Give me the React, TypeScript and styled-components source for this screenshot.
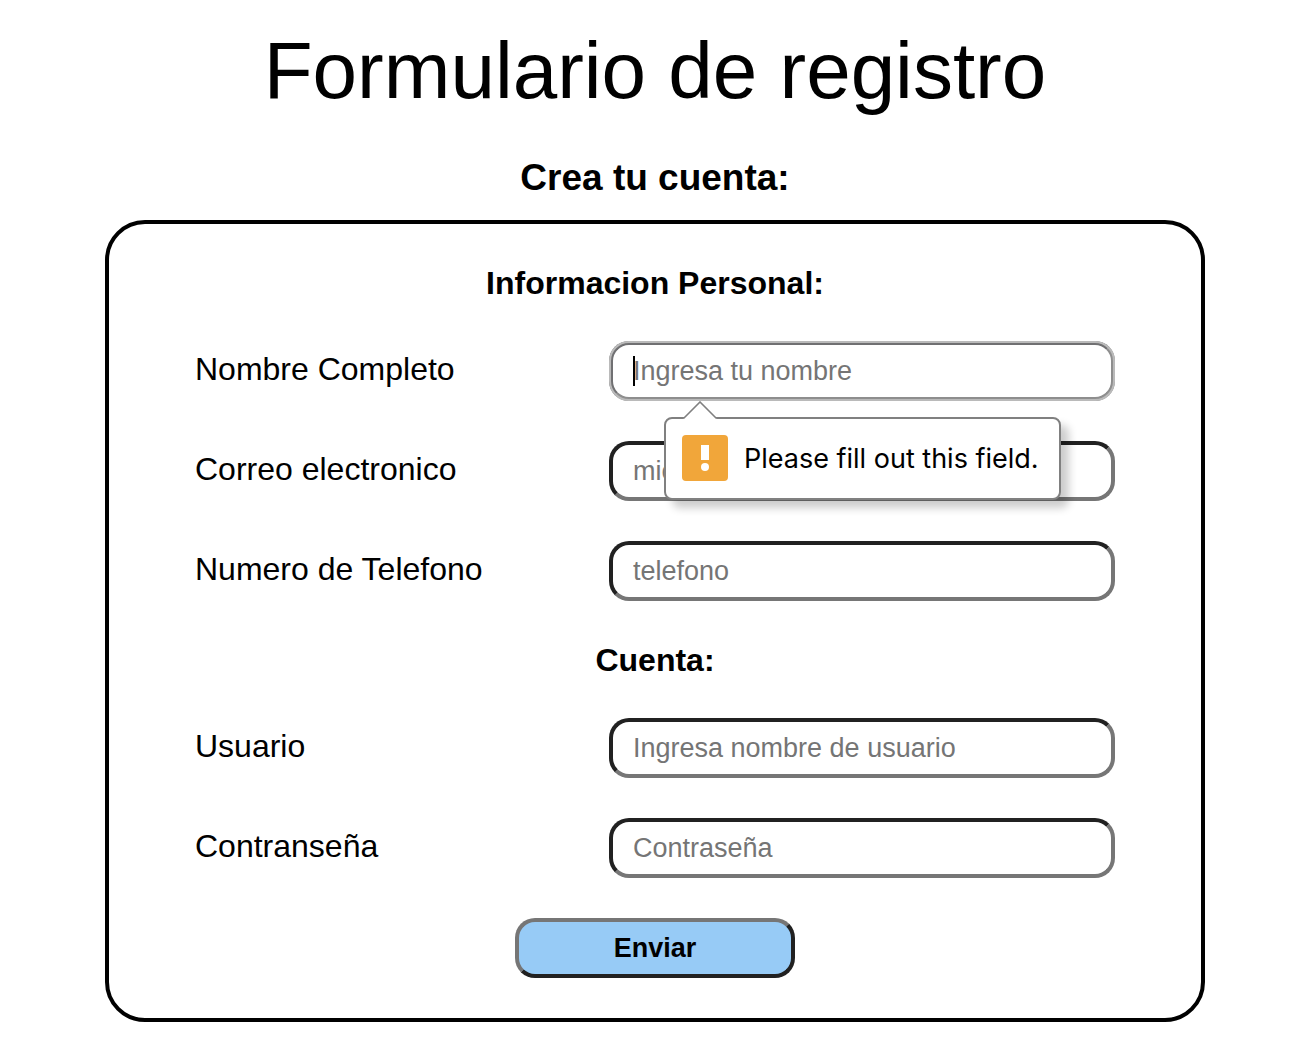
import React from "react";
import styled, { createGlobalStyle, css } from "styled-components";

const GlobalStyle = createGlobalStyle`
  *, *::before, *::after { box-sizing: border-box; }
  body {
    margin: 0;
    background: #fff;
    color: #000;
    font-family: Helvetica, "Liberation Sans", Arial, sans-serif;
    font-size: 32px;
  }
`;

const Page = styled.main`
  display: flex;
  flex-direction: column;
  align-items: center;
  padding: 26px 4px 24px 0;
`;

const Title = styled.h1`
  margin: 0 0 40px;
  font-size: 80px;
  line-height: 90px;
  font-weight: 400;
  text-align: center;
`;

const Subtitle = styled.h2`
  margin: 0 0 20px;
  font-size: 37px;
  line-height: 44px;
  font-weight: 700;
`;

const Form = styled.form`
  display: flex;
  flex-direction: column;
  gap: 40px;
  width: 84%;
  max-width: 1100px;
  padding: 40px 86px;
  border: 4px solid #000;
  border-radius: 40px;
`;

const Section = styled.section`
  display: flex;
  flex-direction: column;
  gap: 40px;
`;

const SectionTitle = styled.h3`
  margin: 0;
  padding-top: 2px;
  font-size: 32px;
  line-height: 35px;
  font-weight: 700;
  text-align: center;
`;

const Row = styled.div`
  display: grid;
  grid-template-columns: 9fr 11fr;
  align-items: center;
`;

const Label = styled.label`
  line-height: 36px;
  padding-bottom: 4px;
`;

const Control = styled.div`
  position: relative;
`;

const Input = styled.input<{ $active?: boolean }>`
  display: block;
  width: 100%;
  height: 60px;
  padding: 0 20px;
  border: 4px inset #767676;
  border-radius: 20px;
  background: #fff;
  font-family: inherit;
  font-size: 27px;
  &::placeholder { color: #757575; opacity: 1; }
  ${(p) =>
    p.$active &&
    css`
      border-style: solid;
      border-color: #707072 #8e8e8e #8e8e8e #707072;
      outline: 2px solid #bababa;
      outline-offset: -2px;
    `}
`;

const Caret = styled.span`
  position: absolute;
  left: 24px;
  top: 15px;
  width: 2px;
  height: 30px;
  background: #000;
`;

const Bubble = styled.div`
  position: absolute;
  z-index: 1;
  left: 55px;
  top: 76px;
  display: flex;
  align-items: flex-start;
  gap: 16px;
  padding: 16px 20px 15px 16px;
  border: 2px solid #808080;
  border-radius: 8px;
  background: #fff;
  box-shadow: 8px 8px 8px rgba(0, 0, 0, 0.2);
  font-family: "Inter", "Liberation Sans", sans-serif;
  font-size: 27px;
  line-height: 48px;
  white-space: nowrap;
`;

const Arrow = styled.svg`
  position: absolute;
  left: 16px;
  top: -18px;
`;

const Submit = styled.button`
  align-self: center;
  width: 280px;
  height: 60px;
  padding: 0;
  border: 4px outset #767676;
  border-radius: 20px;
  background: #97cbf6;
  color: #000;
  font-family: inherit;
  font-size: 27px;
  font-weight: 700;
`;

interface FieldProps {
  id: string;
  label: string;
  placeholder: string;
  type?: string;
  message?: string;
}

function Field({ id, label, placeholder, type = "text", message }: FieldProps) {
  return (
    <Row>
      <Label htmlFor={id}>{label}</Label>
      <Control>
        <Input
          id={id}
          name={id}
          type={type}
          placeholder={placeholder}
          required
          $active={!!message}
          aria-describedby={message ? `${id}-message` : undefined}
        />
        {message && (
          <>
            <Caret />
            <Bubble id={`${id}-message`} role="alert">
              <Arrow width="36" height="18" viewBox="0 0 36 18" aria-hidden="true">
                <path d="M1 18 L2 17 L18 1 L34 17 L35 18 Z" fill="#fff" />
                <path d="M1 17 H2 L18 1 L34 17 H35" fill="none" stroke="#808080" strokeWidth="1.6" />
              </Arrow>
              <svg width="46" height="46" viewBox="0 0 46 46" aria-hidden="true">
                <rect width="46" height="46" rx="4" fill="#f1a63a" />
                <rect x="19" y="10" width="8" height="15" fill="#fff" />
                <circle cx="23" cy="32" r="4" fill="#fff" />
              </svg>
              {message}
            </Bubble>
          </>
        )}
      </Control>
    </Row>
  );
}

export default function App() {
  return (
    <>
      <GlobalStyle />
      <Page>
        <Title>Formulario de registro</Title>
        <Subtitle>Crea tu cuenta:</Subtitle>
        <Form noValidate onSubmit={(e) => e.preventDefault()}>
          <Section>
            <SectionTitle>Informacion Personal:</SectionTitle>
            <Field
              id="nombre"
              label="Nombre Completo"
              placeholder="Ingresa tu nombre"
              message="Please fill out this field."
            />
            <Field id="correo" label="Correo electronico" placeholder="micorreo" type="email" />
            <Field id="telefono" label="Numero de Telefono" placeholder="telefono" type="tel" />
          </Section>
          <Section>
            <SectionTitle>Cuenta:</SectionTitle>
            <Field id="usuario" label="Usuario" placeholder="Ingresa nombre de usuario" />
            <Field id="contrasena" label="Contranseña" placeholder="Contraseña" type="password" />
          </Section>
          <Submit type="submit">Enviar</Submit>
        </Form>
      </Page>
    </>
  );
}
